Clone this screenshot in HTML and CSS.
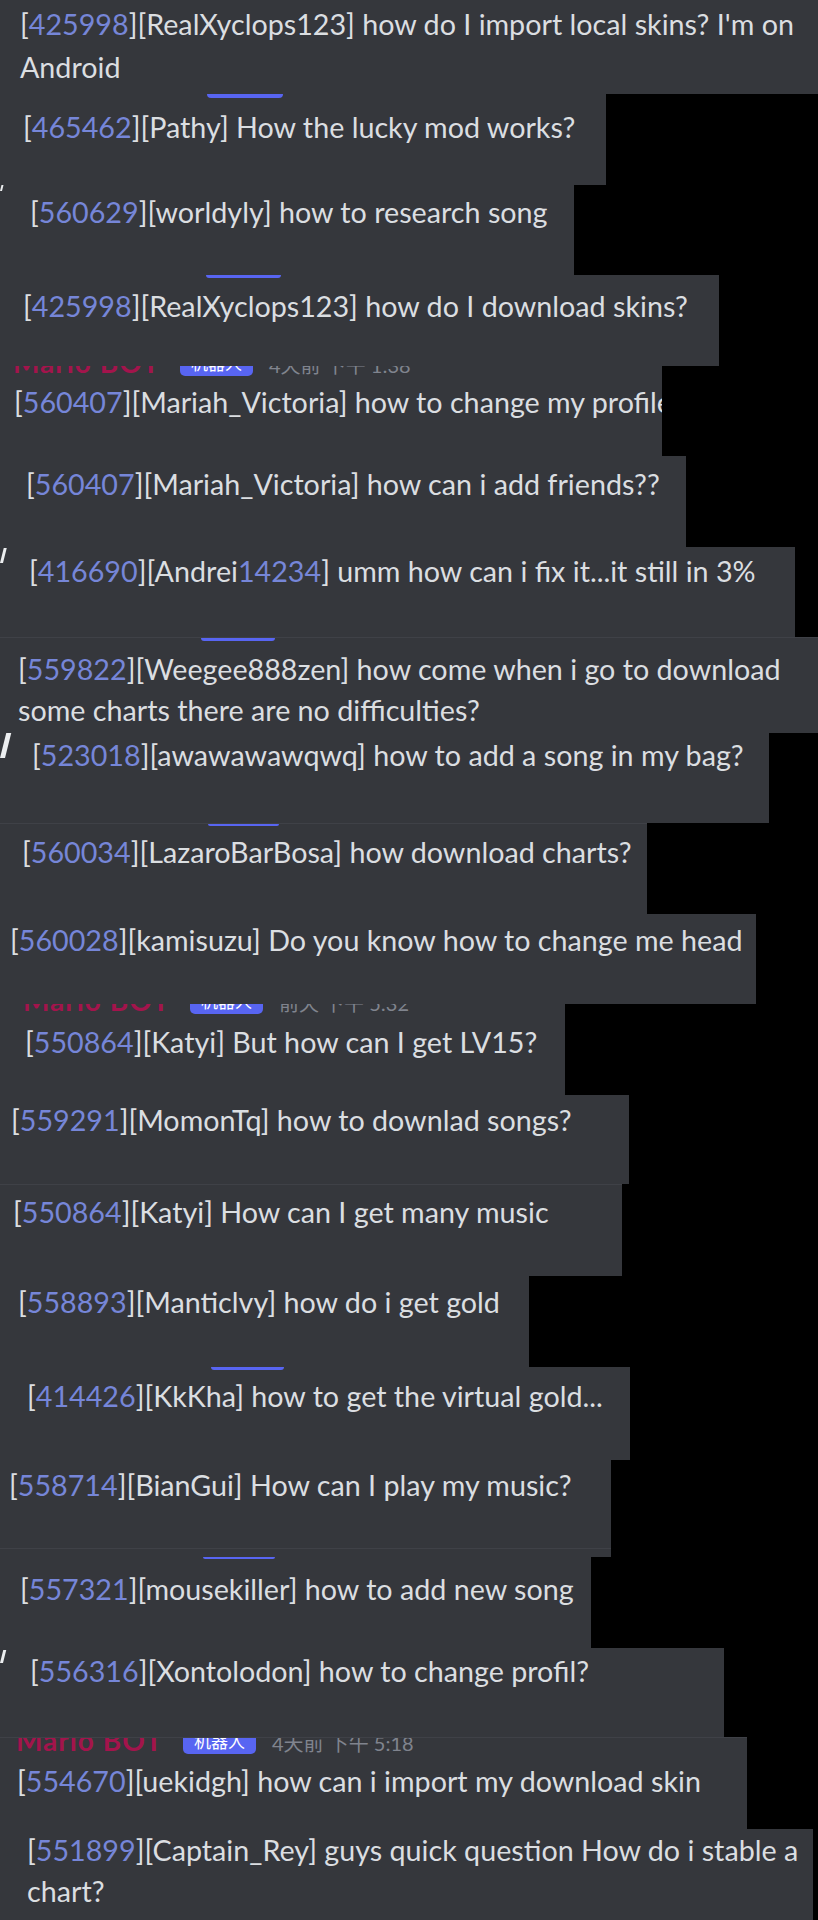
FILE: index.html
```html
<!DOCTYPE html>
<html lang="en">
<head>
    <meta charset="UTF-8">
    <meta name="viewport" content="width=device-width, initial-scale=1.0">
    <title>Help channel questions</title>
    <link rel="stylesheet" href="styles.css">
</head>
<body>
    <main class="collage">
        <!-- each strip is one cropped message; size and text offset come from the crop -->
        <section class="strip wrap" style="--w:818px;--h:94px;--x:20px;--m:3px;--lh:43px">
            <p class="msg">[<span class="num">425998</span>][RealXyclops123] how do I import local skins? I'm on Android</p>
        </section>

        <section class="strip" style="--w:606px;--h:91px;--x:23px;--m:9px">
            <div class="sliver" style="--bx:207px;--bw:76px;--bh:4px"></div>
            <p class="msg">[<span class="num">465462</span>][Pathy] How the lucky mod works?</p>
        </section>

        <section class="strip tick" style="--w:574px;--h:90px;--x:30px;--m:7px;--ty:-4px;--th:10px;--tw:2px">
            <p class="msg">[<span class="num">560629</span>][worldyly] how to research song</p>
        </section>

        <section class="strip" style="--w:719px;--h:91px;--x:23px;--m:8px">
            <div class="sliver" style="--bx:206px;--bw:75px;--bh:3px"></div>
            <p class="msg">[<span class="num">425998</span>][RealXyclops123] how do I download skins?</p>
        </section>

        <section class="strip" style="--w:662px;--h:90px;--x:14px;--m:6px">
            <div class="peek" style="--ph:10px;--hx:13px">
                <div class="head"><span class="who">Mario BOT</span><span class="bot">机器人</span><span class="when">4天前 下午 1:38</span></div>
            </div>
            <p class="msg">[<span class="num">560407</span>][Mariah_Victoria] how to change my profile</p>
        </section>

        <section class="strip" style="--w:686px;--h:91px;--x:26px;--m:8px">
            <p class="msg">[<span class="num">560407</span>][Mariah_Victoria] how can i add friends??</p>
        </section>

        <section class="strip tick" style="--w:795px;--h:90px;--x:29px;--m:4px;--ty:1px;--th:15px;--tw:3px">
            <p class="msg">[<span class="num">416690</span>][Andrei<span class="num">14234</span>] umm how can i fix it...it still in 3%</p>
        </section>

        <section class="strip wrap ruled" style="--w:818px;--h:96px;--x:18px;--m:8px">
            <div class="sliver" style="--bx:201px;--bw:74px;--bh:3px"></div>
            <p class="msg">[<span class="num">559822</span>][Weegee888zen] how come when i go to download some charts there are no difficulties?</p>
        </section>

        <section class="strip tick" style="--w:769px;--h:90px;--x:32px;--m:2px;--ty:0px;--th:25px;--tw:5px">
            <p class="msg">[<span class="num">523018</span>][awawawawqwq] how to add a song in my bag?</p>
        </section>

        <section class="strip ruled" style="--w:647px;--h:91px;--x:22px;--m:6px">
            <div class="sliver" style="--bx:208px;--bw:71px;--bh:2px"></div>
            <p class="msg">[<span class="num">560034</span>][LazaroBarBosa] how download charts?</p>
        </section>

        <section class="strip" style="--w:756px;--h:90px;--x:10px;--m:6px">
            <p class="msg">[<span class="num">560028</span>][kamisuzu] Do you know how to change me head</p>
        </section>

        <section class="strip" style="--w:565px;--h:91px;--x:25px;--m:8px">
            <div class="peek" style="--ph:10px;--hx:23px">
                <div class="head"><span class="who">Mario BOT</span><span class="bot">机器人</span><span class="when">前天 下午 5:32</span></div>
            </div>
            <p class="msg">[<span class="num">550864</span>][Katyi] But how can I get LV15?</p>
        </section>

        <section class="strip" style="--w:629px;--h:89px;--x:11px;--m:5px">
            <p class="msg">[<span class="num">559291</span>][MomonTq] how to downlad songs?</p>
        </section>

        <section class="strip ruled" style="--w:622px;--h:92px;--x:13px;--m:7px">
            <p class="msg">[<span class="num">550864</span>][Katyi] How can I get many music</p>
        </section>

        <section class="strip" style="--w:529px;--h:91px;--x:18px;--m:6px">
            <p class="msg">[<span class="num">558893</span>][Manticlvy] how do i get gold</p>
        </section>

        <section class="strip" style="--w:630px;--h:93px;--x:27px;--m:6px">
            <div class="sliver" style="--bx:211px;--bw:73px;--bh:3px"></div>
            <p class="msg">[<span class="num">414426</span>][KkKha] how to get the virtual gold...</p>
        </section>

        <section class="strip" style="--w:611px;--h:88px;--x:9px;--m:5px">
            <p class="msg">[<span class="num">558714</span>][BianGui] How can I play my music?</p>
        </section>
        <div class="strip ruled" style="--w:611px;--h:9px"></div>

        <section class="strip" style="--w:591px;--h:91px;--x:20px;--m:10px">
            <div class="sliver" style="--bx:203px;--bw:72px;--bh:2px"></div>
            <p class="msg">[<span class="num">557321</span>][mousekiller] how to add new song</p>
        </section>

        <section class="strip tick" style="--w:724px;--h:89px;--x:30px;--m:3px;--ty:2px;--th:13px;--tw:3px">
            <p class="msg">[<span class="num">556316</span>][Xontolodon] how to change profil?</p>
        </section>

        <section class="strip ruled" style="--w:747px;--h:92px;--x:17px;--m:7px">
            <div class="peek" style="--ph:16px;--hx:16px">
                <div class="head"><span class="who">Mario BOT</span><span class="bot">机器人</span><span class="when">4天前 下午 5:18</span></div>
            </div>
            <p class="msg">[<span class="num">554670</span>][uekidgh] how can i import my download skin</p>
        </section>

        <section class="strip wrap" style="--w:813px;--h:91px;--x:27px;--m:1px">
            <p class="msg">[<span class="num">551899</span>][Captain_Rey] guys quick question How do i stable a chart?</p>
        </section>
    </main>
</body>
</html>
```
FILE: styles.css
```css
body {
    margin: 0;
    background: #000;
    font-family: Lato, "Noto Sans CJK SC", sans-serif;
}
.collage {
    display: flex;
    flex-direction: column;
    align-items: flex-start;
}
.strip {
    position: relative;
    display: flex;
    flex-direction: column;
    flex: none;
    box-sizing: border-box;
    width: var(--w);
    height: var(--h);
    background: #35373c;
    overflow: hidden;
}
.ruled {
    border-top: 1px solid #3f4147;
}
.msg {
    margin: var(--m) 0 0;
    padding: 0 6px 0 var(--x);
    font-size: 28.7px;
    line-height: var(--lh, 41px);
    color: #dbdee1;
    white-space: nowrap;
}
.wrap .msg {
    white-space: normal;
}
.num {
    color: #7686d8;
}
/* bottom edge of a bot badge that was cut off by the crop */
.sliver {
    flex: none;
    margin-left: var(--bx);
    width: var(--bw);
    height: var(--bh);
    background: #5865f2;
    border-radius: 0 0 4px 4px;
}
/* only the lower part of the header line survived the crop */
.peek {
    flex: none;
    display: flex;
    flex-direction: column;
    justify-content: flex-end;
    height: var(--ph);
    overflow: hidden;
}
.head {
    flex: none;
    display: flex;
    align-items: flex-end;
    padding-left: var(--hx);
    height: 28px;
}
.who {
    font-size: 28px;
    line-height: 28px;
    font-weight: 700;
    letter-spacing: 1px;
    color: #a3144c;
}
.bot {
    margin-left: 20px;
    padding: 0 11px;
    font-size: 17px;
    line-height: 24px;
    color: #fff;
    background: #5865f2;
    border-radius: 5px;
}
.when {
    margin-left: 16px;
    font-size: 20px;
    line-height: 22px;
    color: #80848e;
}
/* scraps of the avatar column at the left edge */
.tick::before {
    content: "";
    position: absolute;
    left: 0;
    top: var(--ty);
    width: var(--tw);
    height: var(--th);
    background: #eceef0;
    transform: skewX(-14deg);
    transform-origin: bottom left;
}
```
